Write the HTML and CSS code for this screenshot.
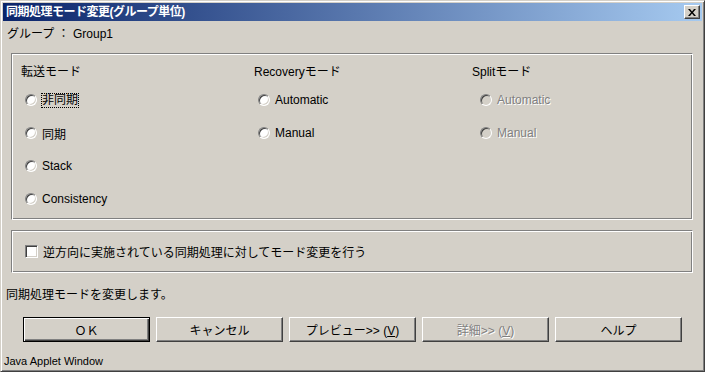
FILE: index.html
```html
<!DOCTYPE html>
<html lang="ja">
<head>
    <meta charset="UTF-8">
    <title>同期処理モード変更(グループ単位)</title>
    <link rel="stylesheet" href="styles.css">
</head>
<body>
    <div class="window">
        <div class="titlebar">
            <span class="title">同期処理モード変更(グループ単位)</span>
            <span class="close-btn">
                <svg width="8" height="7" viewBox="0 0 8 7">
                    <path d="M0 0h2l2 2.5L6 0h2L5 3.5 8 7H6L4 4.5 2 7H0l3-3.5z" fill="#000"/>
                </svg>
            </span>
        </div>

        <div class="group-line">グループ ： Group1</div>

        <div class="box mode-box">
            <div class="col col-transfer">
                <div class="col-title">転送モード</div>
                <div class="radio"><span class="dot"></span><span class="focus">非同期</span></div>
                <div class="radio"><span class="dot"></span><span>同期</span></div>
                <div class="radio"><span class="dot"></span><span>Stack</span></div>
                <div class="radio"><span class="dot"></span><span>Consistency</span></div>
            </div>
            <div class="col col-recovery">
                <div class="col-title">Recoveryモード</div>
                <div class="radio"><span class="dot"></span><span>Automatic</span></div>
                <div class="radio"><span class="dot"></span><span>Manual</span></div>
            </div>
            <div class="col col-split">
                <div class="col-title">Splitモード</div>
                <div class="radio disabled"><span class="dot"></span><span>Automatic</span></div>
                <div class="radio disabled"><span class="dot"></span><span>Manual</span></div>
            </div>
        </div>

        <div class="box check-box">
            <div class="check"><span class="tick"></span><span>逆方向に実施されている同期処理に対してモード変更を行う</span></div>
        </div>

        <div class="status">同期処理モードを変更します。</div>

        <div class="buttons">
            <div class="btn default"><span>ＯＫ</span></div>
            <div class="btn"><span>キャンセル</span></div>
            <div class="btn"><span>プレビュー&gt;&gt; (<u>V</u>)</span></div>
            <div class="btn disabled"><span>詳細&gt;&gt; (<u>V</u>)</span></div>
            <div class="btn"><span>ヘルプ</span></div>
        </div>

        <div class="applet">Java Applet Window</div>
    </div>
</body>
</html>
```

FILE: styles.css
```css
body {
    margin: 0;
    font-family: "Liberation Sans", "Noto Sans CJK JP", sans-serif;
    font-size: 12px;
    color: #000;
    background-color: #d4d0c8;
}
.window {
    width: 705px;
    height: 372px;
    box-sizing: border-box;
    background-color: #d4d0c8;
    border: 1px solid;
    border-color: #d4d0c8 #404040 #404040 #d4d0c8;
    box-shadow: inset 1px 1px 0 #fff, inset -1px -1px 0 #808080;
    padding: 2px;
    display: flex;
    flex-direction: column;
}
.titlebar {
    height: 18px;
    display: flex;
    align-items: center;
    justify-content: space-between;
    padding: 0 2px 0 3px;
    background: linear-gradient(to right, #0a246a, #a6caf0);
    color: #fff;
    font-weight: bold;
}
.title {
    line-height: 18px;
    letter-spacing: -0.5px;
}
.close-btn {
    width: 16px;
    height: 14px;
    box-sizing: border-box;
    background-color: #d4d0c8;
    border: 1px solid;
    border-color: #fff #404040 #404040 #fff;
    box-shadow: inset -1px -1px 0 #808080;
    display: flex;
    align-items: center;
    justify-content: center;
}
.group-line {
    margin-top: 6px;
    line-height: 14px;
    padding-left: 4px;
}
.box {
    margin-left: 8px;
    width: 682px;
    box-sizing: border-box;
    border: 1px solid;
    border-color: #808080 #fff #fff #808080;
    box-shadow: inset 1px 1px 0 #fff, inset -1px -1px 0 #808080;
}
.mode-box {
    margin-top: 12px;
    height: 167px;
    padding: 11px 0 0 9px;
    display: grid;
    grid-template-columns: 233px 218px 1fr;
}
.col {
    display: flex;
    flex-direction: column;
    gap: 19px;
}
.col-title {
    line-height: 14px;
    margin-bottom: -5px;
}
.radio {
    height: 14px;
    display: flex;
    align-items: center;
    gap: 5px;
    padding-left: 4px;
}
.col-split .radio {
    padding-left: 8px;
}
.dot {
    width: 12px;
    height: 12px;
    box-sizing: border-box;
    border-radius: 50%;
    background-color: #fff;
    border: 1px solid;
    border-color: #808080 #fff #fff #808080;
    box-shadow: inset 1px 1px 0 #404040, inset -1px -1px 0 #d4d0c8;
}
.focus {
    outline: 1px dotted #000;
    line-height: 13px;
}
.disabled {
    color: #808080;
    text-shadow: 1px 1px 0 #fff;
}
.radio.disabled .dot {
    background-color: #d4d0c8;
}
.check-box {
    margin-top: 10px;
    height: 43px;
    padding: 13px 0 0 13px;
}
.check {
    height: 14px;
    display: flex;
    align-items: center;
    gap: 5px;
}
.tick {
    width: 13px;
    height: 13px;
    box-sizing: border-box;
    background-color: #fff;
    border: 1px solid;
    border-color: #808080 #fff #fff #808080;
    box-shadow: inset 1px 1px 0 #404040, inset -1px -1px 0 #d4d0c8;
}
.status {
    margin-top: 15px;
    line-height: 14px;
    padding-left: 3px;
}
.buttons {
    margin-top: 15px;
    padding-left: 20px;
    display: flex;
    gap: 6px;
}
.btn {
    width: 127px;
    height: 25px;
    box-sizing: border-box;
    border: 1px solid;
    border-color: #fff #404040 #404040 #fff;
    box-shadow: inset -1px -1px 0 #808080;
    display: flex;
    align-items: center;
    justify-content: center;
}
.btn.default {
    border: 1px solid #000;
    box-shadow: inset 1px 1px 0 #fff, inset -1px -1px 0 #404040, inset -2px -2px 0 #808080;
}
.applet {
    margin-top: 12px;
    line-height: 14px;
    font-size: 11px;
    padding-left: 1px;
}
```
